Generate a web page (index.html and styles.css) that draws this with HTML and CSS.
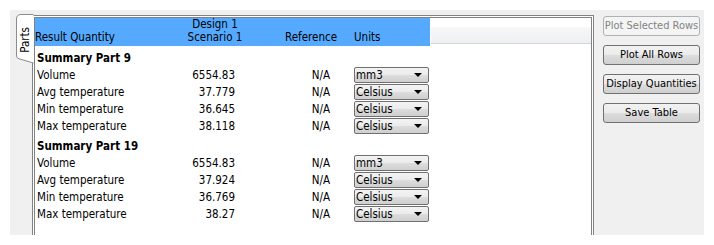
FILE: index.html
```html
<!DOCTYPE html>
<html>
<head>
<meta charset="utf-8">
<link rel="stylesheet" href="styles.css">
</head>
<body>
<div class="window">
  <div class="tabs">
    <div class="tab">
      <svg class="tab-shape" width="19" height="50" viewBox="0 0 19 50"><path d="M18.5,0.5 H6 Q1.5,0.5 1.5,5 V42 Q1.5,44 4,44.8 L18.5,49" fill="#fff" stroke="#8c8c8c" stroke-width="1"/></svg>
      <span class="tab-label">Parts</span>
    </div>
  </div>
  <div class="frame">
    <div class="head">
      <div class="head-cols">
        <div class="h1">Result Quantity</div>
        <div class="h2"><div>Design 1</div><div>Scenario 1</div></div>
        <div class="h3">Reference</div>
        <div class="h4">Units</div>
      </div>
      <div class="head-rest"></div>
    </div>
    <div class="group">
      <div class="summary">Summary Part 9</div>
      <div class="row"><div class="c1">Volume</div><div class="c2">6554.83</div><div class="c3">N/A</div><div class="c4"><div class="dd">mm3<span class="arrow"></span></div></div></div>
      <div class="row"><div class="c1">Avg temperature</div><div class="c2">37.779</div><div class="c3">N/A</div><div class="c4"><div class="dd">Celsius<span class="arrow"></span></div></div></div>
      <div class="row"><div class="c1">Min temperature</div><div class="c2">36.645</div><div class="c3">N/A</div><div class="c4"><div class="dd">Celsius<span class="arrow"></span></div></div></div>
      <div class="row"><div class="c1">Max temperature</div><div class="c2">38.118</div><div class="c3">N/A</div><div class="c4"><div class="dd">Celsius<span class="arrow"></span></div></div></div>
    </div>
    <div class="group">
      <div class="summary">Summary Part 19</div>
      <div class="row"><div class="c1">Volume</div><div class="c2">6554.83</div><div class="c3">N/A</div><div class="c4"><div class="dd">mm3<span class="arrow"></span></div></div></div>
      <div class="row"><div class="c1">Avg temperature</div><div class="c2">37.924</div><div class="c3">N/A</div><div class="c4"><div class="dd">Celsius<span class="arrow"></span></div></div></div>
      <div class="row"><div class="c1">Min temperature</div><div class="c2">36.769</div><div class="c3">N/A</div><div class="c4"><div class="dd">Celsius<span class="arrow"></span></div></div></div>
      <div class="row"><div class="c1">Max temperature</div><div class="c2">38.27</div><div class="c3">N/A</div><div class="c4"><div class="dd">Celsius<span class="arrow"></span></div></div></div>
    </div>
  </div>
  <div class="side">
    <div class="btn disabled">Plot Selected Rows</div>
    <div class="btn">Plot All Rows</div>
    <div class="btn">Display Quantities</div>
    <div class="btn">Save Table</div>
  </div>
</div>
</body>
</html>
```
FILE: styles.css
```css
html, body {
  margin: 0;
  padding: 0;
  background: #ffffff;
}
body {
  font-family: "DejaVu Sans Condensed", "DejaVu Sans", sans-serif;
  font-stretch: condensed;
  font-size: 11px;
  color: #000;
}
.window {
  margin: 10px;
  width: 694px;
  height: 225px;
  background: #f0f0f0;
  display: flex;
  overflow: hidden;
}
.tabs {
  width: 22px;
  flex: none;
  padding-top: 4px;
  padding-left: 5px;
  box-sizing: border-box;
}
.tab {
  position: relative;
  width: 18px;
  height: 50px;
  display: flex;
  justify-content: center;
  align-items: center;
}
.tab-shape {
  position: absolute;
  left: 0;
  top: 0;
}
.tab-label {
  position: relative;
  writing-mode: vertical-rl;
  transform: rotate(180deg);
  margin-top: 2px;
  margin-left: 1px;
  font-size: 11.5px;
}
.frame {
  flex: none;
  margin-top: 5px;
  width: 562px;
  height: 240px;
  box-sizing: border-box;
  border: 3px double #828282;
  background: #fff;
  font-size: 11.5px;
}
.head {
  display: flex;
  height: 28px;
}
.head-cols {
  display: grid;
  grid-template-columns: 150px 60px 101px 84px;
  background: #55aaff;
  align-items: end;
  line-height: 13px;
  padding-bottom: 2px;
  box-sizing: border-box;
  white-space: nowrap;
}
.head-rest {
  flex: 1;
  margin-top: 9px;
  margin-left: 1px;
  height: 16px;
  background: linear-gradient(#f7f7f8, #eeeff0);
  border-bottom: 1px solid #d6d6d6;
}
.h1 { padding-left: 0; }
.h2 { text-align: center; }
.h3 { text-align: right; padding-right: 9px; }
.h4 { padding-left: 8px; }
.group {
  padding-top: 4px;
}
.summary {
  height: 16px;
  line-height: 16px;
  font-weight: bold;
  padding-left: 2px;
  white-space: nowrap;
}
.row {
  display: grid;
  grid-template-columns: 150px 60px 101px 84px;
  height: 17px;
  align-items: center;
  white-space: nowrap;
}
.c1 { padding-left: 2px; }
.c2 { text-align: right; padding-right: 10px; }
.c3 { text-align: right; padding-right: 16px; }
.c4 { padding-left: 8px; }
.dd {
  position: relative;
  width: 75px;
  height: 16px;
  box-sizing: border-box;
  border: 1px solid #707070;
  border-radius: 2px;
  background: linear-gradient(#f3f3f3 0%, #ebebeb 50%, #dddddd 51%, #cfcfcf 100%);
  line-height: 14px;
  padding-left: 1px;
  color: #000;
}
.arrow {
  position: absolute;
  right: 6px;
  top: 5px;
  width: 0;
  height: 0;
  border-left: 4px solid transparent;
  border-right: 4px solid transparent;
  border-top: 4px solid #000;
}
.side {
  flex: none;
  margin-left: 9px;
  padding-top: 6px;
  width: 97px;
  display: flex;
  flex-direction: column;
  gap: 9px;
}
.btn {
  height: 20px;
  box-sizing: border-box;
  border: 1px solid #707070;
  border-radius: 3px;
  background: linear-gradient(#f2f2f2 0%, #ebebeb 50%, #dddddd 51%, #cfcfcf 100%);
  text-align: center;
  line-height: 18px;
  white-space: nowrap;
}
.btn.disabled {
  border-color: #adb2b5;
  background: #f4f4f4;
  color: #838383;
}
```
